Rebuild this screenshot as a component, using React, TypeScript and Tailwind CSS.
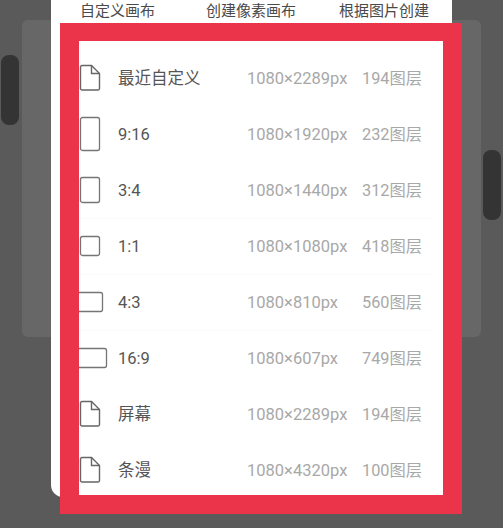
const rows = [
  { icon: "doc", name: "最近自定义", size: "1080×2289px", layers: "194图层" },
  { icon: "r916", name: "9:16", size: "1080×1920px", layers: "232图层" },
  { icon: "r34", name: "3:4", size: "1080×1440px", layers: "312图层", line: true },
  { icon: "r11", name: "1:1", size: "1080×1080px", layers: "418图层", line: true },
  { icon: "r43", name: "4:3", size: "1080×810px", layers: "560图层", line: true },
  { icon: "r169", name: "16:9", size: "1080×607px", layers: "749图层" },
  { icon: "doc", name: "屏幕", size: "1080×2289px", layers: "194图层" },
  { icon: "doc", name: "条漫", size: "1080×4320px", layers: "100图层" },
];

// x/y/w/h of each ratio outline inside the 32x40 icon box
const frames: Record<string, number[]> = {
  r916: [1.5, 2.5, 19, 33],
  r34: [1.5, 6.5, 19, 25],
  r11: [1.5, 9.5, 19, 19],
  r43: [-4, 9.5, 27.5, 19],
  r169: [-4, 9.5, 31.5, 19],
};

function RatioIcon({ kind }: { kind: string }) {
  if (kind === "doc") {
    return (
      <svg width="32" height="40" viewBox="0 0 32 40" fill="none" stroke="#666" strokeWidth="1.4" className="shrink-0">
        <path d="M3 6.5h9.5l8 8V29.5a1.5 1.5 0 0 1-1.5 1.5H3a1.5 1.5 0 0 1-1.5-1.5V8A1.5 1.5 0 0 1 3 6.5Z" />
        <path d="M12.5 6.5v8h8" />
      </svg>
    );
  }
  const [x, y, w, h] = frames[kind];
  return (
    <svg width="32" height="40" viewBox="0 0 32 40" fill="none" stroke="#757575" strokeWidth="1.3" className="shrink-0">
      <rect x={x} y={y} width={w} height={h} rx="2" />
    </svg>
  );
}

export default function App() {
  return (
    <div className="relative h-[528px] w-[503px] overflow-hidden bg-[#5a5a5a] font-['Roboto','Noto_Sans_CJK_SC',sans-serif]">
      {/* dimmed cards behind the sheet */}
      <div className="absolute left-[22px] top-[20px] h-[317px] w-[459px] rounded-[6px] bg-[#676767]" />
      <div className="absolute left-[1px] top-[55px] h-[70px] w-[18px] rounded-[8px] bg-[#343434]" />
      <div className="absolute left-[483px] top-[150px] h-[70px] w-[18px] rounded-[8px] bg-[#343434]" />

      {/* white sheet */}
      <div className="absolute left-[51px] top-0 h-[497px] w-[401px] rounded-bl-[12px] bg-white">
        <div className="flex h-[23px] items-center whitespace-nowrap text-[15px] leading-none text-[#4a4a4a]">
          <span className="ml-[29px] w-[126px]">自定义画布</span>
          <span className="w-[133px]">创建像素画布</span>
          <span>根据图片创建</span>
        </div>
      </div>

      {/* red highlight frame */}
      <div className="absolute left-[60px] top-[23px] h-[491px] w-[402px] border-[19px] border-t-[18px] border-[#eb3349]">
        <div className="h-full overflow-hidden bg-white pt-[10px]">
          {rows.map((row, i) => (
            <div
              key={i}
              className={row.line ? "mr-[11px] flex h-[56px] items-center border-y border-t-white border-b-[#fafafa]" : "mr-[11px] flex h-[56px] items-center"}
            >
              <RatioIcon kind={row.icon} />
              <span className="ml-[7px] w-[129px] text-[16.5px] text-[#555]">{row.name}</span>
              <span className="w-[115px] whitespace-nowrap text-[16.5px] text-[#a8a8a8]">{row.size}</span>
              <span className="whitespace-nowrap text-[16.3px] text-[#a8a8a8]">{row.layers}</span>
            </div>
          ))}
        </div>
      </div>
    </div>
  );
}
